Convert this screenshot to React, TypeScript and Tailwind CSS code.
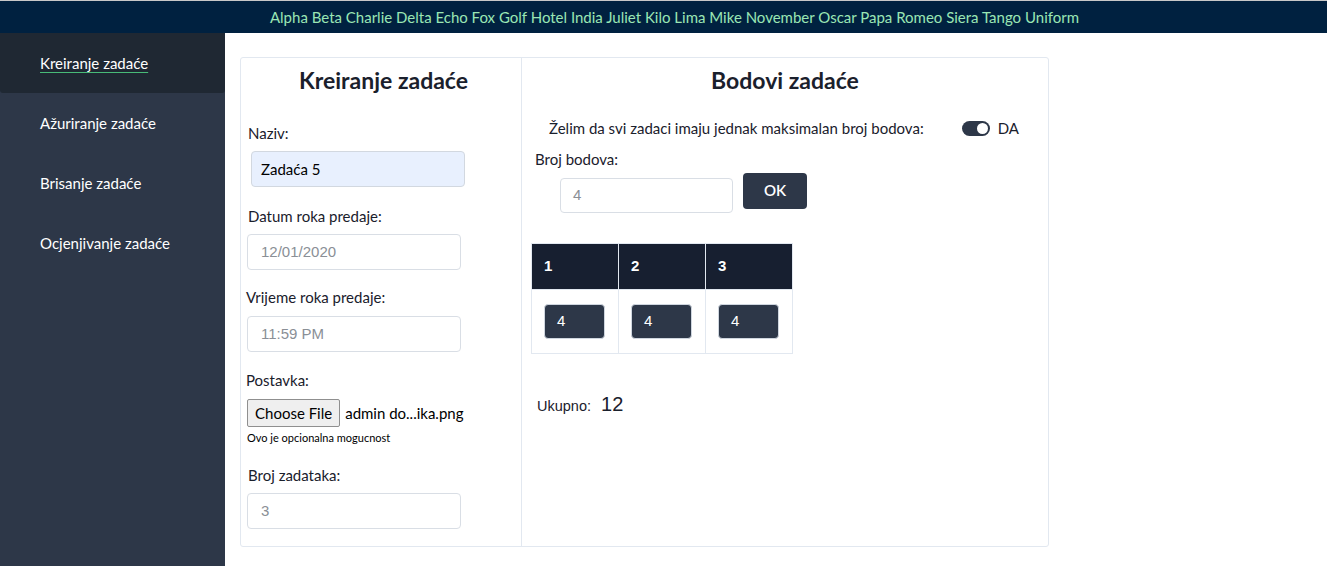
import { useState } from "react";

const navItems = [
  "Kreiranje zadaće",
  "Ažuriranje zadaće",
  "Brisanje zadaće",
  "Ocjenjivanje zadaće",
];

const App = () => {
  const [equal, setEqual] = useState(true);

  return (
    <div className="min-h-[566px] flex flex-col bg-white font-['Lato','Open_Sans',sans-serif] text-[#1a202c]">
      <div className="h-[33px] bg-[#002140] border-t border-[#c8c8c8] flex items-center justify-center pl-[22px] text-[15px] text-[#9ae6b4]">
        Alpha Beta Charlie Delta Echo Fox Golf Hotel India Juliet Kilo Lima Mike November Oscar Papa Romeo Siera Tango Uniform
      </div>

      <div className="flex flex-1">
        <aside className="w-[225px] shrink-0 bg-[#2d3748] min-h-[533px]">
          {navItems.map((item, i) => (
            <div
              key={item}
              className={
                i === 0
                  ? "h-[60px] flex items-center pl-10 bg-[#1f2833] rounded-b-[3px] text-[15px] text-white"
                  : "h-[60px] flex items-center pl-10 text-[15px] text-white"
              }
            >
              <span
                className={
                  i === 0
                    ? "underline decoration-[#48bb78] underline-offset-[3px]"
                    : ""
                }
              >
                {item}
              </span>
            </div>
          ))}
        </aside>

        <main className="flex-1 pl-[15px] pt-6">
          <div className="w-[809px] h-[490px] flex border border-[#e2e8f0] rounded-[3px]">
            {/* left column */}
            <div className="w-[281px] border-r border-[#e2e8f0] pl-[5px] pt-[8px]">
              <h2 className="text-center text-[23px] font-bold leading-[28px] text-[#1a202c]">
                Kreiranje zadaće
              </h2>

              <label className="block mt-[29px] pl-[2px] text-[15px] leading-5">Naziv:</label>
              <div className="mt-[8px] ml-[5px] w-[214px] h-9 rounded-[4px] border border-[#d2d8e0] bg-[#e8f0fe] flex items-center px-[9px] text-[15px] text-black">
                Zadaća 5
              </div>

              <label className="block mt-[19px] pl-[2px] text-[15px] leading-5">Datum roka predaje:</label>
              <div className="mt-[8px] ml-[1px] w-[214px] h-9 rounded-[4px] border border-[#d9dee5] flex items-center px-[13px] font-['Liberation_Sans',Arial,sans-serif] text-[15px] text-[#8a8f96]">
                12/01/2020
              </div>

              <label className="block mt-[17px] text-[15px] leading-5">Vrijeme roka predaje:</label>
              <div className="mt-[9px] ml-[1px] w-[214px] h-9 rounded-[4px] border border-[#d9dee5] flex items-center px-[13px] font-['Liberation_Sans',Arial,sans-serif] text-[15px] text-[#8a8f96]">
                11:59 PM
              </div>

              <label className="block mt-[18px] text-[15px] leading-5">Postavka:</label>
              <div className="mt-[9px] ml-[1px] flex items-center gap-[5px]">
                <span className="h-[28px] px-[7px] flex items-center border border-[#8f8f8f] rounded-[2px] bg-[#efefef] text-[15px] text-black">
                  Choose File
                </span>
                <span className="text-[15px] text-black">admin do...ika.png</span>
              </div>
              <p className="mt-[3px] ml-[1px] text-[11px] leading-4 text-black">Ovo je opcionalna mogucnost</p>

              <label className="block mt-[19px] pl-[2px] text-[15px] leading-5">Broj zadataka:</label>
              <div className="mt-[8px] ml-[1px] w-[214px] h-9 rounded-[4px] border border-[#d9dee5] flex items-center px-[13px] font-['Liberation_Sans',Arial,sans-serif] text-[15px] text-[#8a8f96]">
                3
              </div>
            </div>

            {/* right column */}
            <div className="flex-1 pt-[8px]">
              <h2 className="text-center text-[23px] font-bold leading-[28px] text-[#1a202c]">
                Bodovi zadaće
              </h2>

              <div className="mt-[23px] flex items-center pl-[27px] text-[15px]">
                <span>Želim da svi zadaci imaju jednak maksimalan broj bodova:</span>
                <button
                  onClick={() => setEqual(!equal)}
                  className={
                    equal
                      ? "ml-[38px] w-[28px] h-[15px] rounded-full bg-[#2d3748] flex items-center justify-end px-[2px]"
                      : "ml-[38px] w-[28px] h-[15px] rounded-full bg-[#cbd5e0] flex items-center justify-start px-[2px]"
                  }
                >
                  <span className="w-[11px] h-[11px] rounded-full bg-white" />
                </button>
                <span className="ml-2">DA</span>
              </div>

              <label className="block mt-[9px] pl-[13px] text-[15px] leading-5">Broj bodova:</label>
              <div className="mt-[4px] flex items-start">
                <div className="mt-[5px] ml-[38px] w-[173px] h-[35px] rounded-[4px] border border-[#d9dee5] flex items-center px-[12px] font-['Liberation_Sans',Arial,sans-serif] text-[15px] text-[#8a8f96]">
                  4
                </div>
                <button className="ml-[10px] w-[64px] h-9 rounded-[4px] bg-[#2d3748] text-white text-[15px] font-semibold">
                  OK
                </button>
              </div>

              <table className="mt-[30px] ml-[9px] border-collapse font-['Liberation_Sans',Arial,sans-serif]">
                <thead>
                  <tr className="bg-[#171f30] text-white">
                    {[1, 2, 3].map((n) => (
                      <th
                        key={n}
                        className="w-[87px] h-[46px] border border-[#e2e8f0] text-left pl-[12px] text-[15px] font-bold"
                      >
                        {n}
                      </th>
                    ))}
                  </tr>
                </thead>
                <tbody>
                  <tr>
                    {[1, 2, 3].map((n) => (
                      <td key={n} className="h-[64px] border border-[#e2e8f0] pl-[12px]">
                        <div className="w-[61px] h-[35px] rounded-[4px] bg-[#2d3748] border border-[#cfd6df] flex items-center pl-[12px] text-[15px] text-white">
                          4
                        </div>
                      </td>
                    ))}
                  </tr>
                </tbody>
              </table>

              <div className="mt-[35px] pl-[15px] flex items-baseline gap-[10px] font-['Liberation_Sans',Arial,sans-serif]">
                <span className="text-[14.5px]">Ukupno:</span>
                <span className="text-[20px]">12</span>
              </div>
            </div>
          </div>
        </main>
      </div>
    </div>
  );
};

export default App;
